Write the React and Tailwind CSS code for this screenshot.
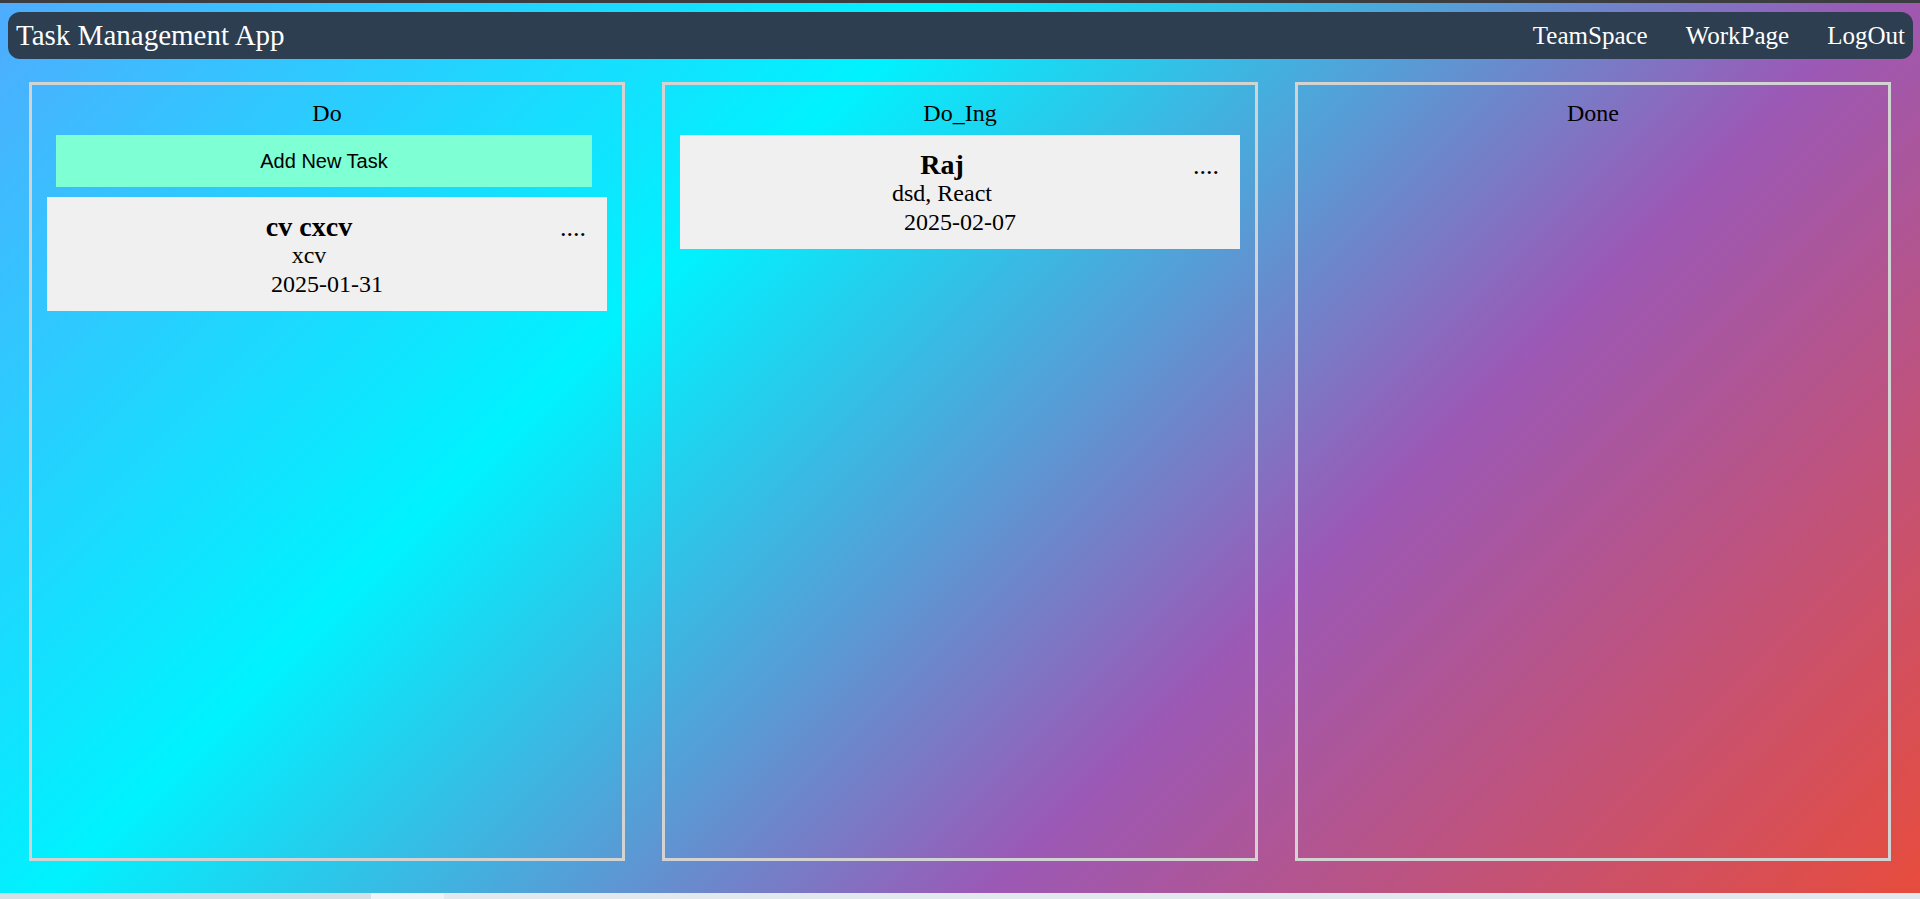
const columns = [
  {
    title: 'Do',
    addButton: true,
    tasks: [{ name: 'cv cxcv', desc: 'xcv', date: '2025-01-31' }],
  },
  {
    title: 'Do_Ing',
    tasks: [{ name: 'Raj', desc: 'dsd, React', date: '2025-02-07' }],
  },
  { title: 'Done', tasks: [] },
]

function TaskCard({ task, first }) {
  return (
    <div className={`w-[560px] h-[114px] mx-auto bg-[#f0f0f0] pt-[16px] pl-[11px] pr-[11px] text-black ${first ? 'mt-[8px]' : 'mt-[10px]'}`}>
      <div className="flex items-baseline">
        <div className="flex-1 text-center">
          <div className="text-[28px] leading-[28px] font-bold">{task.name}</div>
          <div className="text-[24px] leading-[29px]">{task.desc}</div>
        </div>
        <span className="text-[26px] leading-[28px] mr-[10px] cursor-pointer">....</span>
      </div>
      <div className="text-[24px] leading-[28px] text-center">{task.date}</div>
    </div>
  )
}

function Column({ col }) {
  return (
    <div className="w-[596px] h-[779px] border-[3px] border-[#d3d3d3] pt-[14px] flex flex-col">
      <h2 className="text-[24px] leading-[28px] text-center text-black">{col.title}</h2>
      {col.addButton && (
        <button className="mt-[8px] ml-[24px] w-[536px] h-[52px] bg-[#7fffd4] text-black text-[20px] font-['Liberation_Sans',sans-serif]">
          Add New Task
        </button>
      )}
      {col.tasks.map((t, i) => <TaskCard key={i} task={t} first={!col.addButton && i === 0} />)}
    </div>
  )
}

export default function App() {
  return (
    <div className="w-[1920px] h-[899px] overflow-hidden flex flex-col font-['Liberation_Serif',serif]">
      <div className="h-[3px] bg-[#3b3d40]" />
      <div className="h-[890px] bg-[linear-gradient(135deg,#4facfe,#00f2fe,#9b59b6,#e74c3c)] pt-[9px]">
        <nav className="ml-[8px] mr-[7px] h-[47px] bg-[#2c3e50] rounded-[12px] flex items-center justify-between pl-[8px] pr-[8px] text-white">
          <span className="text-[29px]">Task Management App</span>
          <div className="flex items-center gap-[38px] text-[25px]">
            <a className="cursor-pointer">TeamSpace</a>
            <a className="cursor-pointer">WorkPage</a>
            <a className="cursor-pointer">LogOut</a>
          </div>
        </nav>
        <div className="flex gap-[37px] px-[29px] mt-[23px]">
          {columns.map((c) => <Column key={c.title} col={c} />)}
        </div>
      </div>
      <div className="flex-1 flex bg-[#d4e0e6]">
        <div className="w-[371px]" />
        <div className="w-[73px] bg-[#eef3f7]" />
        <div className="flex-1 bg-[#e1e9ee]" />
      </div>
    </div>
  )
}
